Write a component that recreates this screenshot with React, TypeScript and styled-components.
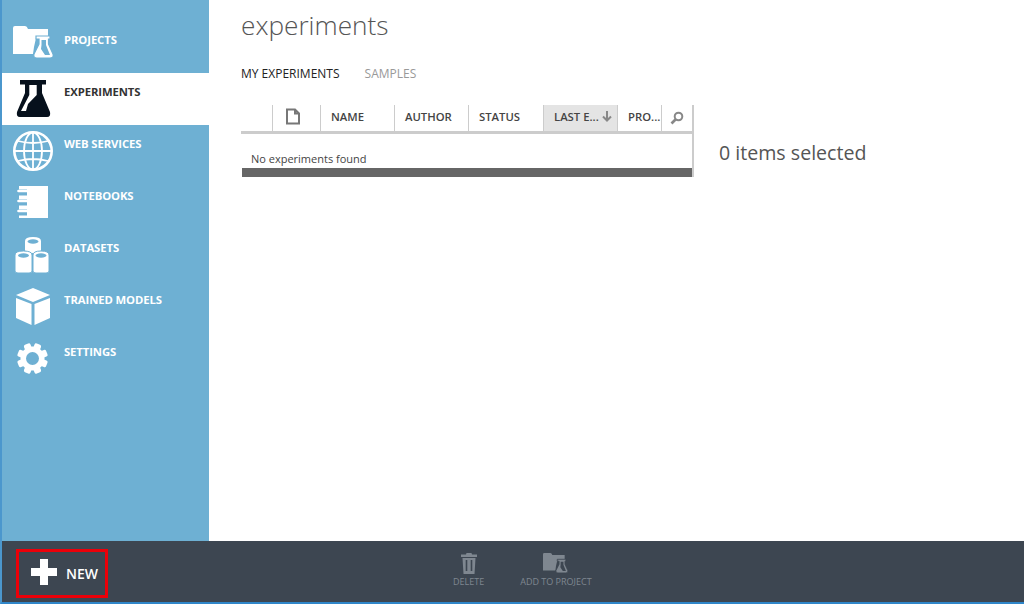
import { ReactNode } from 'react';
import styled, { createGlobalStyle } from 'styled-components';

const GlobalStyle = createGlobalStyle`
  html, body { margin: 0; padding: 0; background: #fff; }
  * { box-sizing: border-box; }
  body { font-family: "Open Sans", "Liberation Sans", sans-serif; }
`;

const Frame = styled.div`
  width: 1024px;
  height: 604px;
  display: flex;
  flex-direction: column;
  border-left: 2px solid #4b97cd;
  border-bottom: 2px solid #2f86c9;
  overflow: hidden;
`;

const Body = styled.div`
  flex: 1;
  display: flex;
  min-height: 0;
`;

const Sidebar = styled.nav`
  width: 207px;
  background: #6eb0d3;
  padding-top: 21px;
  display: flex;
  flex-direction: column;
`;

const NavItem = styled.div<{ $active?: boolean }>`
  height: 52px;
  display: flex;
  align-items: flex-start;
  gap: 11px;
  padding: 0 0 0 11px;
  background: ${(p) => (p.$active ? '#fff' : 'transparent')};
  color: ${(p) => (p.$active ? '#333' : '#fff')};
`;

const NavIcon = styled.svg`
  width: 40px;
  height: 44px;
  flex: none;
  margin-top: 4px;
`;

const NavLabel = styled.span`
  font-size: 11.3px;
  font-weight: 700;
  line-height: 15px;
  margin-top: 11px;
  letter-spacing: -0.1px;
`;

const Content = styled.main`
  flex: 1;
  padding: 7px 0 0 32px;
`;

const Title = styled.h1`
  margin: 0;
  font-size: 26.2px;
  font-weight: 300;
  line-height: 36px;
  color: #555;
`;

const Tabs = styled.div`
  display: flex;
  gap: 25px;
  margin-top: 22px;
`;

const Tab = styled.span<{ $muted?: boolean }>`
  font-size: 12px;
  line-height: 18px;
  color: ${(p) => (p.$muted ? '#999' : '#222')};
`;

const Workspace = styled.div`
  display: flex;
  margin-top: 22px;
`;

const Table = styled.div`
  width: 453px;
  height: 72px;
  border-right: 2px solid #ccc;
  display: flex;
  flex-direction: column;
`;

const HeaderRow = styled.div`
  height: 29px;
  display: flex;
  border-bottom: 3px solid #ccc;
`;

const HeaderCell = styled.div<{ $width: number; $sorted?: boolean }>`
  width: ${(p) => p.$width}px;
  flex: none;
  display: flex;
  align-items: center;
  gap: 3px;
  padding: 0 0 3px 10px;
  border-right: 1px solid #ccc;
  background: ${(p) => (p.$sorted ? '#e4e4e4' : 'transparent')};
  font-size: 11.3px;
  font-weight: 600;
  color: #444;
  white-space: nowrap;
`;

const IconCell = styled(HeaderCell)`
  padding-left: 12px;
`;

const SearchCell = styled.div`
  flex: 1;
  display: flex;
  align-items: center;
  justify-content: center;
`;

const EmptyRow = styled.div`
  flex: 1;
  display: flex;
  align-items: flex-end;
  padding: 0 0 1px 10px;
  font-size: 11px;
  line-height: 16px;
  color: #444;
`;

const TableFooter = styled.div`
  height: 9px;
  margin-left: 1px;
  background: #666;
`;

const Selection = styled.div`
  margin: 34px 0 0 25px;
  font-size: 19.6px;
  line-height: 28px;
  color: #555;
`;

const CommandBar = styled.footer`
  height: 61px;
  flex: none;
  display: flex;
  background: #3d4651;
`;

const NewButton = styled.div`
  width: 92px;
  height: 49px;
  margin: 8px 0 0 14px;
  border: 3px solid #ec0009;
  display: flex;
  align-items: center;
  padding: 0 0 4px 12px;
  gap: 9px;
  color: #fff;
  font-size: 14px;
  font-weight: 600;
`;

const NewLabel = styled.span`
  margin-top: 3px;
`;

const Actions = styled.div`
  display: flex;
  margin-left: 345px;
  gap: 36px;
`;

const Action = styled.div`
  display: flex;
  flex-direction: column;
  align-items: center;
  padding-top: 11px;
  font-size: 9px;
  line-height: 12px;
  color: #7f8790;
`;

const ActionIcon = styled.svg`
  width: 26px;
  height: 22px;
  margin-bottom: 2px;
`;

const FolderFlask = ({ fill, cut }: { fill: string; cut: string }) => (
  <>
    <path
      d="M0 3 Q0 1 2 1 H12 Q14 1 15 4 H35 V11 H23 V13 L21 22 L20 29 H0 Z"
      fill={fill}
    />
    <path
      d="M23 11 H37 V14 H35.5 V19 L40 29 Q41 33 37 33 H24 Q20 33 21 29 L26 19 V14 H23 Z"
      fill={fill}
      stroke={cut}
      strokeWidth="1.2"
    />
    <path d="M28.5 15 H33 V20 L37 30 H32 L28 24 L28.5 20 Z" fill={cut} />
  </>
);

const navItems: { label: string; active?: boolean; icon: ReactNode }[] = [
  {
    label: 'PROJECTS',
    icon: <FolderFlask fill="#fff" cut="#6eb0d3" />,
  },
  {
    label: 'EXPERIMENTS',
    active: true,
    icon: (
      <>
        <path
          d="M7 3 H33 V7.5 H29 V16 L37 35 Q38 40 34 40 H7 Q3 40 4 35 L12 16 V7.5 H7 Z"
          fill="#06101c"
        />
        <path d="M16.3 8 H23.7 V18 L15 27 L13 34 H8 L16.3 18 Z" fill="#fff" />
      </>
    ),
  },
  {
    label: 'WEB SERVICES',
    icon: (
      <g fill="none" stroke="#fff" strokeWidth="1.8" transform="translate(0 2)">
        <circle cx="20" cy="20" r="18.7" strokeWidth="2.6" />
        <ellipse cx="20" cy="20" rx="9" ry="18.5" />
        <path d="M20 1.5 V38.5 M1.5 20 H38.5 M5 10 Q20 14 35 10 M5 30 Q20 26 35 30" />
      </g>
    ),
  },
  {
    label: 'NOTEBOOKS',
    icon: (
      <>
        <path d="M6 5 H35 V37 H6 Z" fill="#fff" />
        <path
          d="M4 8.5 H14 V14.5 H4 Z M4 18.5 H14 V24.5 H4 Z M4 28.5 H14 V34.5 H4 Z"
          fill="#6eb0d3"
        />
        <path
          d="M5.5 10 H14 M5.5 20 H14 M5.5 30 H14"
          fill="none"
          stroke="#fff"
          strokeWidth="2.6"
          strokeLinecap="round"
        />
      </>
    ),
  },
  {
    label: 'DATASETS',
    icon: (
      <>
        <path d="M12 8 Q12 4 20 4 Q28 4 28 8 V17 Q28 20 20 20 Q12 20 12 17 Z" fill="#fff" />
        <ellipse cx="20" cy="8.5" rx="5.5" ry="2.2" fill="#6eb0d3" />
        <path d="M2 22 Q2 18 10.5 18 Q19 18 19 22 V38 Q19 40 16 40 H5 Q2 40 2 38 Z" fill="#fff" stroke="#6eb0d3" />
        <ellipse cx="10.5" cy="22.5" rx="5.5" ry="2.2" fill="#6eb0d3" />
        <path d="M20 22 Q20 18 28 18 Q36 18 36 22 V38 Q36 40 33 40 H23 Q20 40 20 38 Z" fill="#fff" stroke="#6eb0d3" />
        <ellipse cx="28" cy="22.5" rx="5.5" ry="2.2" fill="#6eb0d3" />
      </>
    ),
  },
  {
    label: 'TRAINED MODELS',
    icon: (
      <g fill="#fff" transform="translate(0 3)">
        <path d="M20 0 L37 7 L20 14 L3 7 Z" />
        <path d="M3 10 L18.5 16 V37 L3 30 Z" />
        <path d="M37 10 L21.5 16 V37 L37 30 Z" />
      </g>
    ),
  },
  {
    label: 'SETTINGS',
    icon: (
      <>
        <g fill="#fff">
          {[22.5, 67.5, 112.5, 157.5, 202.5, 247.5, 292.5, 337.5].map((a) => (
            <rect key={a} x="16" y="6" width="7" height="7" rx="1.8" transform={`rotate(${a} 19.5 21.5)`} />
          ))}
          <circle cx="19.5" cy="21.5" r="12" />
        </g>
        <circle cx="19.5" cy="21.5" r="6.5" fill="#6eb0d3" />
      </>
    ),
  },
];

const columns = [
  { label: 'NAME', width: 74 },
  { label: 'AUTHOR', width: 74 },
  { label: 'STATUS', width: 75 },
];

const App = () => (
  <>
    <GlobalStyle />
    <Frame>
      <Body>
        <Sidebar>
          {navItems.map((item) => (
            <NavItem key={item.label} $active={item.active}>
              <NavIcon viewBox="0 0 40 44">{item.icon}</NavIcon>
              <NavLabel>{item.label}</NavLabel>
            </NavItem>
          ))}
        </Sidebar>
        <Content>
          <Title>experiments</Title>
          <Tabs>
            <Tab>MY EXPERIMENTS</Tab>
            <Tab $muted>SAMPLES</Tab>
          </Tabs>
          <Workspace>
            <Table>
              <HeaderRow>
                <HeaderCell $width={32} />
                <IconCell $width={48}>
                  <svg width="16" height="17" viewBox="0 0 16 17" fill="none" stroke="#777" strokeWidth="2">
                    <path d="M2 1.5 H10 L14 5.5 V15.5 H2 Z M10 1.5 V5.5 H14" />
                  </svg>
                </IconCell>
                {columns.map((c) => (
                  <HeaderCell key={c.label} $width={c.width}>
                    {c.label}
                  </HeaderCell>
                ))}
                <HeaderCell $width={74} $sorted>
                  LAST E...
                  <svg width="10" height="11" viewBox="0 0 10 11" fill="none" stroke="#888" strokeWidth="2">
                    <path d="M5 0 V9 M1 5.5 L5 9.5 L9 5.5" />
                  </svg>
                </HeaderCell>
                <HeaderCell $width={44}>PRO...</HeaderCell>
                <SearchCell>
                  <svg width="14" height="14" viewBox="0 0 14 14" fill="none" stroke="#888" strokeWidth="2">
                    <circle cx="8.5" cy="5.5" r="3.8" />
                    <path d="M5.5 8.5 L1.5 12.5" strokeWidth="2.6" />
                  </svg>
                </SearchCell>
              </HeaderRow>
              <EmptyRow>No experiments found</EmptyRow>
              <TableFooter />
            </Table>
            <Selection>0 items selected</Selection>
          </Workspace>
        </Content>
      </Body>
      <CommandBar>
        <NewButton>
          <svg width="26" height="26" viewBox="0 0 26 26" fill="#fff">
            <path d="M9 0 H17 V9 H26 V17 H17 V26 H9 V17 H0 V9 H9 Z" />
          </svg>
          <NewLabel>NEW</NewLabel>
        </NewButton>
        <Actions>
          <Action>
            <ActionIcon viewBox="0 0 26 22">
              <path
                d="M10.5 1 H15.5 L16 2.5 H21 V5 H5 V2.5 H10 Z M6.5 6 H19.5 L18.5 22 H7.5 Z"
                fill="#7f8790"
              />
              <path d="M10.5 8 V19 M15.5 8 V19" stroke="#3d4651" strokeWidth="1.6" />
            </ActionIcon>
            DELETE
          </Action>
          <Action>
            <ActionIcon viewBox="0 0 42 34" preserveAspectRatio="xMidYMid meet">
              <FolderFlask fill="#7f8790" cut="#3d4651" />
            </ActionIcon>
            ADD TO PROJECT
          </Action>
        </Actions>
      </CommandBar>
    </Frame>
  </>
);

export default App;
